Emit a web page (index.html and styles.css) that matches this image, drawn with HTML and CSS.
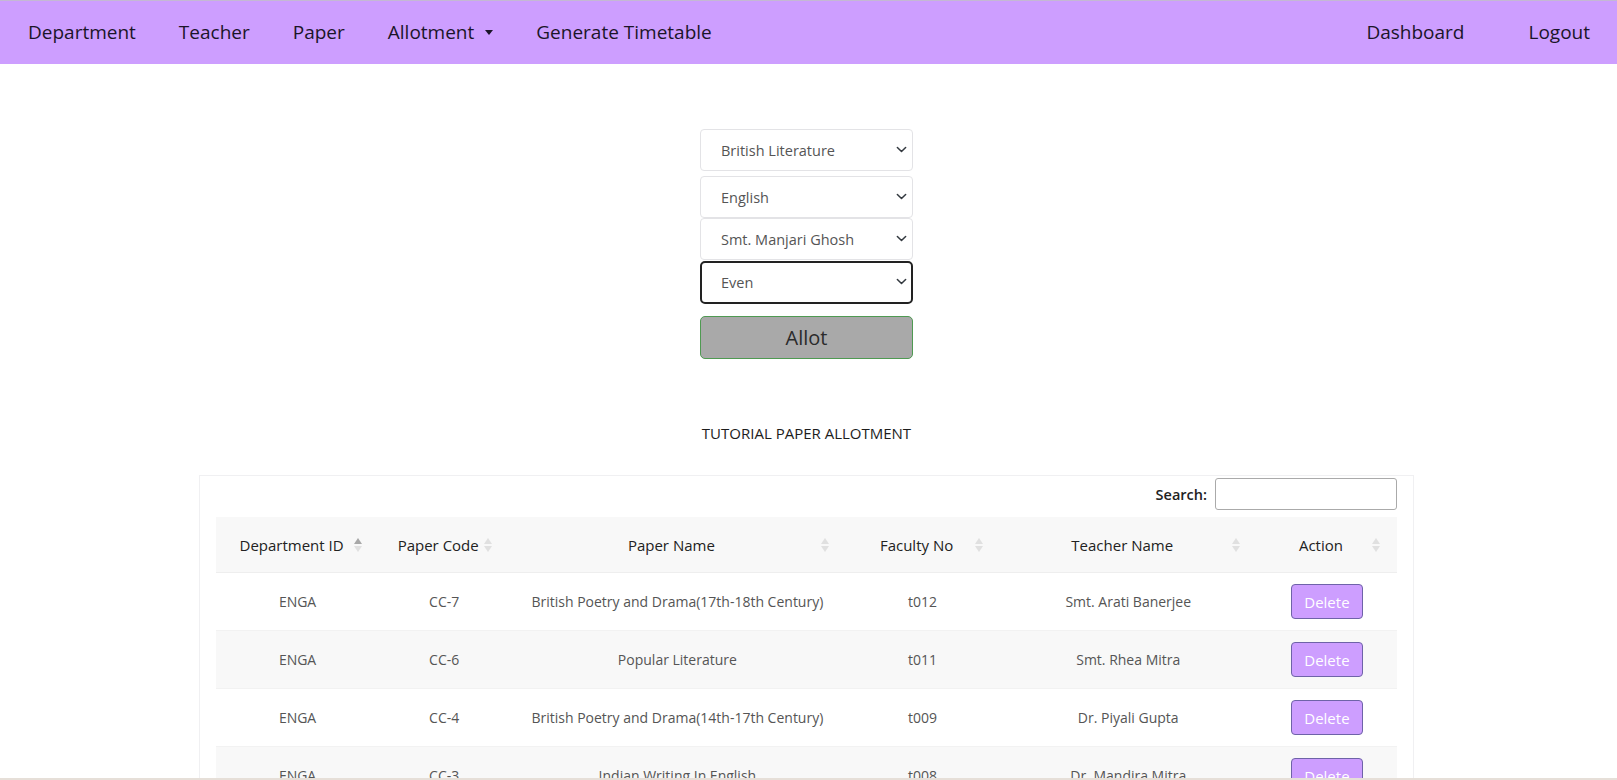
FILE: index.html
```html
<!DOCTYPE html>
<html lang="en">
<head>
<meta charset="utf-8">
<title>Tutorial Paper Allotment</title>
<link rel="stylesheet" href="styles.css">
</head>
<body>
<nav class="navbar">
  <div class="nav-left">
    <a class="nav-link" href="#">Department</a>
    <a class="nav-link" href="#">Teacher</a>
    <a class="nav-link" href="#">Paper</a>
    <a class="nav-link dropdown" href="#">Allotment<span class="caret"></span></a>
    <a class="nav-link" href="#">Generate Timetable</a>
  </div>
  <div class="nav-right">
    <a class="nav-link" href="#">Dashboard</a>
    <a class="nav-link" href="#">Logout</a>
  </div>
</nav>

<main class="main">
  <form class="allot-form">
    <div class="select-wrap first">
      <select class="form-select"><option>British Literature</option></select>
      <svg class="chev" viewBox="0 0 16 16" width="11" height="11"><path d="M2 5l6 6 6-6" fill="none" stroke="#343a40" stroke-width="2.2" stroke-linecap="round" stroke-linejoin="round"/></svg>
    </div>
    <div class="select-wrap">
      <select class="form-select"><option>English</option></select>
      <svg class="chev" viewBox="0 0 16 16" width="11" height="11"><path d="M2 5l6 6 6-6" fill="none" stroke="#343a40" stroke-width="2.2" stroke-linecap="round" stroke-linejoin="round"/></svg>
    </div>
    <div class="select-wrap">
      <select class="form-select"><option>Smt. Manjari Ghosh</option></select>
      <svg class="chev" viewBox="0 0 16 16" width="11" height="11"><path d="M2 5l6 6 6-6" fill="none" stroke="#343a40" stroke-width="2.2" stroke-linecap="round" stroke-linejoin="round"/></svg>
    </div>
    <div class="select-wrap focused">
      <select class="form-select"><option>Even</option></select>
      <svg class="chev" viewBox="0 0 16 16" width="11" height="11"><path d="M2 5l6 6 6-6" fill="none" stroke="#343a40" stroke-width="2.2" stroke-linecap="round" stroke-linejoin="round"/></svg>
    </div>
    <button type="button" class="allot-btn">Allot</button>
  </form>

  <h6 class="title">TUTORIAL PAPER ALLOTMENT</h6>

  <section class="card">
    <div class="search-row">
      <label class="search-label">Search:</label>
      <input class="search-input" type="search">
    </div>
    <table class="data-table">
      <colgroup>
        <col class="c1"><col class="c2"><col class="c3"><col class="c4"><col class="c5"><col class="c6">
      </colgroup>
      <thead>
        <tr>
          <th>Department ID<span class="sort asc"><i class="up"></i><i class="down"></i></span></th>
          <th>Paper Code<span class="sort"><i class="up"></i><i class="down"></i></span></th>
          <th>Paper Name<span class="sort"><i class="up"></i><i class="down"></i></span></th>
          <th>Faculty No<span class="sort"><i class="up"></i><i class="down"></i></span></th>
          <th>Teacher Name<span class="sort"><i class="up"></i><i class="down"></i></span></th>
          <th>Action<span class="sort"><i class="up"></i><i class="down"></i></span></th>
        </tr>
      </thead>
      <tbody>
        <tr>
          <td>ENGA</td><td>CC-7</td><td>British Poetry and Drama(17th-18th Century)</td><td>t012</td><td>Smt. Arati Banerjee</td><td><button type="button" class="del-btn">Delete</button></td>
        </tr>
        <tr class="odd">
          <td>ENGA</td><td>CC-6</td><td>Popular Literature</td><td>t011</td><td>Smt. Rhea Mitra</td><td><button type="button" class="del-btn">Delete</button></td>
        </tr>
        <tr>
          <td>ENGA</td><td>CC-4</td><td>British Poetry and Drama(14th-17th Century)</td><td>t009</td><td>Dr. Piyali Gupta</td><td><button type="button" class="del-btn">Delete</button></td>
        </tr>
        <tr class="odd">
          <td>ENGA</td><td>CC-3</td><td>Indian Writing In English</td><td>t008</td><td>Dr. Mandira Mitra</td><td><button type="button" class="del-btn">Delete</button></td>
        </tr>
        <tr>
          <td>ENGA</td><td>CC-2</td><td>British Poetry and Drama(Chaucer to Elizabethan)</td><td>t007</td><td>Dr. Sreyashi Das</td><td><button type="button" class="del-btn">Delete</button></td>
        </tr>
      </tbody>
    </table>
  </section>
</main>
</body>
</html>
```

FILE: styles.css
```css
html, body {
  margin: 0;
  padding: 0;
  overflow: hidden;
  height: 780px;
}
body {
  font-family: "Open Sans", "Noto Sans", sans-serif;
  color: #212529;
  background: #fff;
  position: relative;
}
body::after {
  content: "";
  position: fixed;
  left: 0;
  right: 0;
  bottom: 0;
  height: 2px;
  background: #e6dfd8;
}

/* NAV */
.navbar {
  height: 64px;
  background: #cd9eff;
  display: flex;
  align-items: center;
  justify-content: space-between;
  padding: 0 27px 0 28px;
  box-sizing: border-box;
  border-top: 1px solid #c4b8d4;
}
.nav-left, .nav-right {
  display: flex;
  align-items: center;
}
.nav-left { gap: 43px; }
.nav-right { gap: 64px; }
.nav-link {
  font-size: 19px;
  color: #1b1529;
  text-decoration: none;
  line-height: 26px;
  display: flex;
  align-items: center;
  margin-top: -2px;
}
.caret {
  display: inline-block;
  width: 0;
  height: 0;
  border-top: 5px solid #1b1529;
  border-left: 4.5px solid transparent;
  border-right: 4.5px solid transparent;
  margin-left: 11px;
  margin-top: 1px;
}

/* FORM */
.main {
  display: flex;
  flex-direction: column;
  align-items: center;
  padding-right: 4px;
}
.allot-form {
  width: 213px;
  margin-top: 65px;
  display: flex;
  flex-direction: column;
}
.select-wrap {
  position: relative;
  height: 42px;
}
.select-wrap.first { margin-bottom: 5px; }
.select-wrap.focused { margin-top: 1px; height: 43px; }
.form-select {
  appearance: none;
  -webkit-appearance: none;
  width: 100%;
  height: 100%;
  box-sizing: border-box;
  border: 1px solid #e3e3e6;
  border-radius: 4px;
  background: #fff;
  padding: 0 30px 0 20px;
  font-family: "Open Sans", sans-serif;
  font-size: 14.5px;
  color: #555;
  outline: none;
}
.focused .form-select {
  border: 2px solid #222;
  border-radius: 5px;
  padding-left: 19px;
}
.chev {
  position: absolute;
  right: 6px;
  top: 15px;
  pointer-events: none;
}
.allot-btn {
  margin-top: 12px;
  height: 43px;
  background: #a9a9a9;
  border: 1px solid #4f9a52;
  border-radius: 5px;
  font-family: "Open Sans", sans-serif;
  font-size: 20px;
  color: #2b2b2b;
  padding: 0;
}

.title {
  margin: 64px 0 0;
  font-size: 15px;
  font-weight: 400;
  color: #1d1d1d;
  line-height: 20px;
  letter-spacing: 0;
}

/* CARD */
.card {
  width: 1215px;
  box-sizing: border-box;
  margin-top: 32px;
  border: 1px solid #f0f0f2;
  border-bottom: none;
  padding: 2px 16px 0 16px;
}
.search-row {
  display: flex;
  justify-content: flex-end;
  align-items: center;
  gap: 8px;
}
.search-label {
  font-size: 14.5px;
  font-weight: 600;
  color: #222;
}
.search-input {
  width: 182px;
  height: 32px;
  box-sizing: border-box;
  border: 1px solid #aaa;
  border-radius: 3px;
  margin: 0;
}
.data-table {
  width: 100%;
  margin-top: 7px;
  border-collapse: collapse;
  table-layout: fixed;
}
.c1 { width: 163px; }
.c2 { width: 130px; }
.c3 { width: 336px; }
.c4 { width: 154px; }
.c5 { width: 257px; }
.c6 { width: 140px; }
.data-table th {
  position: relative;
  height: 55px;
  background: #f8f8f8;
  font-size: 15px;
  font-weight: 500;
  color: #222;
  padding: 0 22px 0 10px;
  text-align: center;
  border-bottom: 1px solid #eeeeee;
}
.sort {
  position: absolute;
  right: 17px;
  top: 50%;
  margin-top: -7px;
  display: flex;
  flex-direction: column;
  gap: 2px;
}
.sort i {
  display: block;
  width: 0;
  height: 0;
  border-left: 4px solid transparent;
  border-right: 4px solid transparent;
}
.sort .up { border-bottom: 6px solid #e0e0e0; }
.sort .down { border-top: 6px solid #e0e0e0; }
.sort.asc .up { border-bottom-color: #a8a8a8; }
.data-table td {
  height: 58px;
  box-sizing: border-box;
  text-align: center;
  font-size: 14px;
  color: #555;
  padding: 0 10px;
  border-top: 1px solid #f2f2f2;
}
.data-table tr.odd td { background: #f8f8f8; }
.del-btn {
  width: 72px;
  height: 35px;
  background: #cd9eff;
  border: 1px solid #6e63a8;
  border-radius: 4px;
  color: #fff;
  font-family: "Open Sans", sans-serif;
  font-size: 15px;
  padding: 0;
}
```
